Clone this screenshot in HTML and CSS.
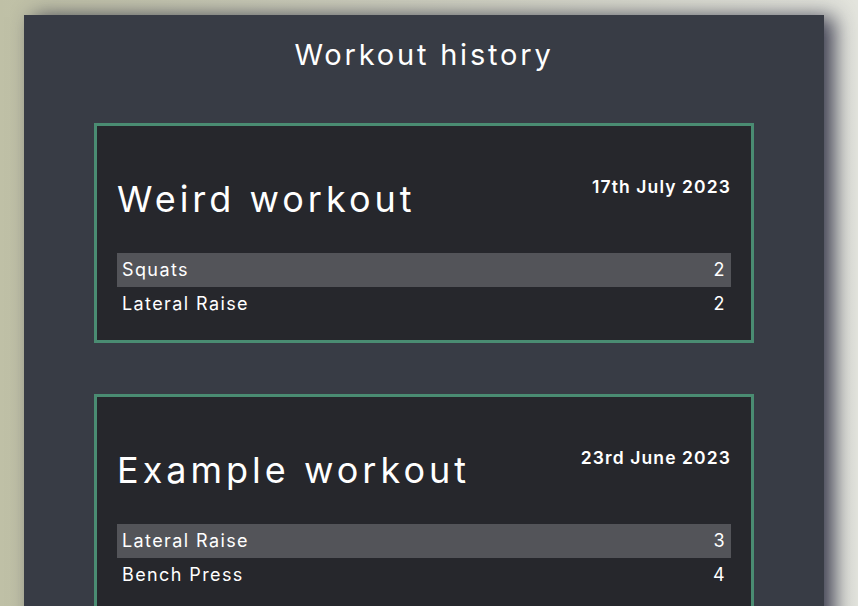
FILE: index.html
```html
<!DOCTYPE html>
<html lang="en">
<head>
<meta charset="utf-8">
<title>Workout history</title>
<link rel="stylesheet" href="styles.css">
</head>
<body>
<main class="panel">
  <h1 class="page-title">Workout history</h1>
  <section class="card">
    <header class="card-head">
      <h2 class="card-title">Weird workout</h2>
      <span class="card-date">17th July 2023</span>
    </header>
    <table class="sets">
      <tr class="row"><td class="name">Squats</td><td class="count">2</td></tr>
      <tr class="row"><td class="name">Lateral Raise</td><td class="count">2</td></tr>
    </table>
  </section>
  <section class="card">
    <header class="card-head">
      <h2 class="card-title">Example workout</h2>
      <span class="card-date">23rd June 2023</span>
    </header>
    <table class="sets">
      <tr class="row"><td class="name">Lateral Raise</td><td class="count">3</td></tr>
      <tr class="row"><td class="name">Bench Press</td><td class="count">4</td></tr>
    </table>
  </section>
</main>
</body>
</html>
```
FILE: styles.css
```css
html, body {
  margin: 0;
  height: 100%;
}
body {
  background: linear-gradient(to right, #bfc0a6 0%, #cfd0c0 50%, #e3e4dd 100%);
  font-family: Inter, "Open Sans", sans-serif;
  color: #ffffff;
  overflow: hidden;
  padding-top: 15px;
  box-sizing: border-box;
}
.panel {
  width: 800px;
  margin-left: 24px;
  background: #383c45;
  min-height: 700px;
  padding-top: 20px;
  box-sizing: border-box;
  box-shadow: 10px 2px 20px rgba(30, 32, 55, 0.85);
}
.page-title {
  margin: 0;
  text-align: center;
  font-size: 29px;
  font-weight: 400;
  line-height: 40px;
  letter-spacing: 2.8px;
}
.card {
  width: 660px;
  box-sizing: border-box;
  margin: 48px auto 0;
  background: #26272c;
  border: 3px solid #4a8c72;
  padding: 20px 20px 19px;
}
.card + .card {
  margin-top: 51px;
}
.card-head {
  display: flex;
  justify-content: space-between;
  align-items: flex-start;
  padding-top: 29px;
  padding-bottom: 30px;
}
.card-title {
  margin: 0;
  font-size: 36px;
  font-weight: 400;
  line-height: 48px;
  letter-spacing: 4px;
}
.card-date {
  font-size: 17.5px;
  font-weight: 600;
  line-height: 20px;
  margin-top: 2px;
  letter-spacing: 1.1px;
}
.sets {
  width: 100%;
  border-collapse: collapse;
}
.row td {
  height: 34px;
  padding: 0 5px;
  font-size: 18px;
  line-height: 34px;
  letter-spacing: 1.4px;
}
.row:nth-child(odd) {
  background: #535459;
}
.count {
  text-align: right;
}
```
